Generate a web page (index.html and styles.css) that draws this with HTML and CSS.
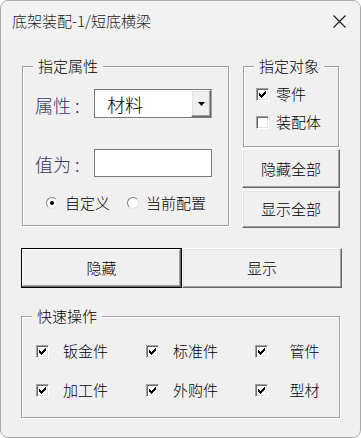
FILE: index.html
```html
<!DOCTYPE html>
<html lang="zh-CN">
<head>
<meta charset="utf-8">
<title>底架装配-1/短底横梁</title>
<link rel="stylesheet" href="styles.css">
</head>
<body>
<div class="window">
  <div class="titlebar">
    <span class="title">底架装配-1/短底横梁</span>
    <span class="close"><svg width="13" height="13" viewBox="0 0 13 13"><path d="M0.5 0.5 L12.5 12.5 M12.5 0.5 L0.5 12.5" stroke="#1a1a1a" stroke-width="1.1" fill="none"/></svg></span>
  </div>
  <div class="content">
    <div class="top-row">
      <div class="group group-attr">
        <span class="legend">指定属性</span>
        <div class="group-body body-attr">
          <div class="field-row row-attr">
            <span class="field-label">属性 :</span>
            <div class="combo">
              <span class="combo-text">材料</span>
              <span class="combo-btn"><svg width="7" height="4" viewBox="0 0 7 4"><path d="M0 0 H7 L3.5 4 Z" fill="#000"/></svg></span>
            </div>
          </div>
          <div class="field-row row-value">
            <span class="field-label">值为 :</span>
            <div class="textbox"></div>
          </div>
          <div class="radio-row">
            <span class="radio-item"><span class="radio on"></span><span class="radio-label">自定义</span></span>
            <span class="radio-item"><span class="radio"></span><span class="radio-label">当前配置</span></span>
          </div>
        </div>
      </div>
      <div class="right-col">
        <div class="group group-target">
          <span class="legend">指定对象</span>
          <div class="group-body body-target">
            <div class="target-row first">
              <span class="cb on"><svg width="7" height="7" viewBox="0 0 7 7"><path d="M0 2h1v1h1v1h1V3h1V2h1V1h1V0h1v3H6v1H5v1H4v1H3v1H2V6H1V5H0z" fill="#000"/></svg></span>
              <span class="cb-label">零件</span>
            </div>
            <div class="target-row">
              <span class="cb"></span>
              <span class="cb-label">装配体</span>
            </div>
          </div>
        </div>
        <button class="btn side-btn first">隐藏全部</button>
        <button class="btn side-btn second">显示全部</button>
      </div>
    </div>
    <div class="main-btns">
      <button class="btn main-btn default">隐藏</button>
      <button class="btn main-btn">显示</button>
    </div>
    <div class="group group-quick">
      <span class="legend">快速操作</span>
      <div class="group-body quick-grid">
        <span class="quick-item"><span class="cb on"><svg width="7" height="7" viewBox="0 0 7 7"><path d="M0 2h1v1h1v1h1V3h1V2h1V1h1V0h1v3H6v1H5v1H4v1H3v1H2V6H1V5H0z" fill="#000"/></svg></span><span class="quick-label">钣金件</span></span>
        <span class="quick-item"><span class="cb on"><svg width="7" height="7" viewBox="0 0 7 7"><path d="M0 2h1v1h1v1h1V3h1V2h1V1h1V0h1v3H6v1H5v1H4v1H3v1H2V6H1V5H0z" fill="#000"/></svg></span><span class="quick-label">标准件</span></span>
        <span class="quick-item"><span class="cb on"><svg width="7" height="7" viewBox="0 0 7 7"><path d="M0 2h1v1h1v1h1V3h1V2h1V1h1V0h1v3H6v1H5v1H4v1H3v1H2V6H1V5H0z" fill="#000"/></svg></span><span class="quick-label">管件</span></span>
        <span class="quick-item"><span class="cb on"><svg width="7" height="7" viewBox="0 0 7 7"><path d="M0 2h1v1h1v1h1V3h1V2h1V1h1V0h1v3H6v1H5v1H4v1H3v1H2V6H1V5H0z" fill="#000"/></svg></span><span class="quick-label">加工件</span></span>
        <span class="quick-item"><span class="cb on"><svg width="7" height="7" viewBox="0 0 7 7"><path d="M0 2h1v1h1v1h1V3h1V2h1V1h1V0h1v3H6v1H5v1H4v1H3v1H2V6H1V5H0z" fill="#000"/></svg></span><span class="quick-label">外购件</span></span>
        <span class="quick-item"><span class="cb on"><svg width="7" height="7" viewBox="0 0 7 7"><path d="M0 2h1v1h1v1h1V3h1V2h1V1h1V0h1v3H6v1H5v1H4v1H3v1H2V6H1V5H0z" fill="#000"/></svg></span><span class="quick-label">型材</span></span>
      </div>
    </div>
  </div>
</div>
</body>
</html>
```
FILE: styles.css
```css
* { box-sizing: border-box; }
html, body {
  margin: 0;
  padding: 0;
  background: #ffffff;
}
body {
  font-family: "Noto Sans CJK SC", "Noto Sans", sans-serif;
  font-size: 15px;
  font-weight: 300;
  color: #000;
}
.window {
  width: 361px;
  height: 438px;
  border: 1px solid #a9a9a9;
  border-radius: 8px;
  background: #f0f0f0;
  overflow: hidden;
}
.titlebar {
  height: 39px;
  display: flex;
  align-items: center;
  justify-content: space-between;
  padding: 0 14px 0 11px;
  background: #f2f2f2;
}
.title {
  font-size: 15px;
  line-height: 20px;
  color: #1a1a1a;
}
.close {
  display: flex;
  width: 13px;
  height: 13px;
  margin-top: 1px;
}
.content {
  padding: 26px 0 0 20px;
}
.top-row {
  display: flex;
  align-items: flex-start;
  margin-left: 1px;
}
.group {
  border: 1px solid #a0a0a0;
  box-shadow: inset 1px 1px 0 #ffffff, 1px 1px 0 #ffffff;
  display: flex;
  flex-direction: column;
}
.legend {
  align-self: flex-start;
  margin: -10px 0 0 10px;
  padding: 0 5px;
  background: #f0f0f0;
  font-size: 15px;
  line-height: 18px;
  height: 18px;
}
.group-body {
  display: flex;
  flex-direction: column;
}
.group-attr {
  width: 207px;
  height: 160px;
}
.body-attr { padding-left: 12px; }
.field-row {
  display: flex;
  align-items: flex-end;
}
.row-attr { margin-top: 14px; }
.row-value { margin-top: 31px; }
.field-label {
  width: 59px;
  font-size: 18px;
  line-height: 22px;
  color: #34346a;
  margin-bottom: 2px;
}
.combo {
  width: 118px;
  height: 29px;
  background: #fff;
  border: 1px solid #7a7a7a;
  border-right-color: #a0a0a0;
  display: flex;
  align-items: center;
  justify-content: space-between;
}
.combo-text {
  padding-left: 12px;
  font-size: 18px;
  line-height: 22px;
}
.combo-btn {
  width: 20px;
  height: 27px;
  background: #f0f0f0;
  border: 1px solid;
  border-color: #ffffff #696969 #696969 #ffffff;
  box-shadow: inset -1px -1px 0 #a0a0a0, inset 1px 1px 0 #e3e3e3;
  display: flex;
  align-items: center;
  justify-content: center;
}
.textbox {
  width: 118px;
  height: 28px;
  background: #fff;
  border: 1px solid #7a7a7a;
}
.radio-row {
  display: flex;
  flex-direction: row;
  align-items: center;
  height: 16px;
  margin-top: 18px;
  padding-left: 11px;
}
.radio-item {
  display: flex;
  align-items: center;
}
.radio-item + .radio-item { margin-left: 17px; }
.radio {
  width: 12px;
  height: 12px;
  border-radius: 50%;
  background: #fff;
  border: 1px solid;
  border-color: #808080 #e3e3e3 #e3e3e3 #808080;
  display: flex;
  align-items: center;
  justify-content: center;
}
.radio.on::after {
  content: "";
  width: 4px;
  height: 4px;
  border-radius: 50%;
  background: #000;
}
.radio-label {
  margin-left: 7px;
  line-height: 18px;
}
.right-col {
  width: 98px;
  margin-left: 13px;
  display: flex;
  flex-direction: column;
}
.group-target {
  width: 96px;
  height: 81px;
  margin-left: 1px;
}
.body-target { padding-left: 12px; }
.target-row {
  display: flex;
  align-items: center;
  height: 16px;
  margin-top: 12px;
}
.target-row.first { margin-top: 11px; }
.cb {
  width: 13px;
  height: 13px;
  flex: none;
  background: #fff;
  border: 1px solid;
  border-color: #a0a0a0 #ffffff #ffffff #a0a0a0;
  box-shadow: inset 1px 1px 0 #696969, inset -1px -1px 0 #e3e3e3;
  display: flex;
  align-items: center;
  justify-content: center;
}
.cb svg { display: block; }
.cb-label {
  margin-left: 7px;
  line-height: 18px;
}
.btn {
  font-family: "Noto Sans CJK SC", "Noto Sans", sans-serif;
  font-size: 15px;
  font-weight: 300;
  color: #000;
  background: #f0f0f0;
  border: 1px solid;
  border-color: #ffffff #696969 #696969 #ffffff;
  box-shadow: inset -1px -1px 0 #a0a0a0, inset 1px 1px 0 #e3e3e3;
  padding: 0;
  margin: 0;
  line-height: 18px;
}
.side-btn {
  width: 98px;
  height: 39px;
  margin-top: 2px;
}
.side-btn.second {
  height: 38px;
  margin-top: 2px;
}
.main-btns {
  display: flex;
  margin-top: 20px;
}
.main-btn {
  width: 160px;
  height: 40px;
}
.main-btn.default {
  width: 161px;
  border: 1px solid #000;
  box-shadow: inset -1px -1px 0 #696969, inset 1px 1px 0 #ffffff, inset -2px -2px 0 #a0a0a0;
}
.group-quick {
  width: 319px;
  height: 102px;
  margin-top: 28px;
}
.quick-grid {
  display: grid;
  grid-template-columns: 110px 109px 80px;
  row-gap: 19px;
  margin-top: 16px;
  padding-left: 14px;
}
.quick-item {
  display: flex;
  align-items: center;
  height: 20px;
}
.quick-label {
  width: 45px;
  margin-left: 14px;
  text-align: center;
  line-height: 18px;
}
```
